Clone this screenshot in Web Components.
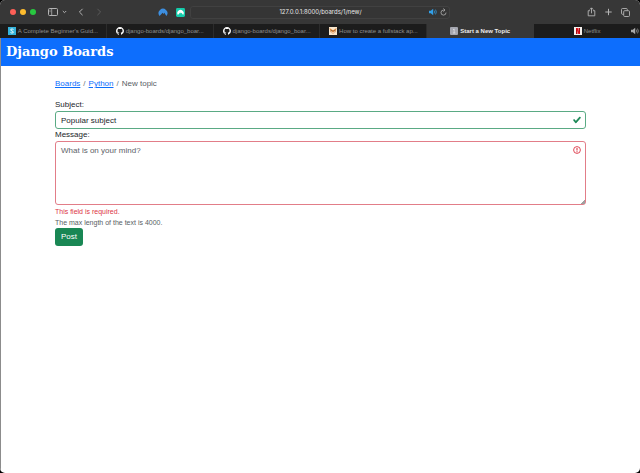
<!DOCTYPE html>
<html lang="en">
<head>
<meta charset="utf-8">
<meta name="viewport" content="width=device-width, initial-scale=1">
<title>Start a New Topic</title>
<style>
  body {
    margin: 0;
    background: #000;
    font-family: "Liberation Sans", Arial, sans-serif;
    font-size: 8px;
    line-height: 12px;
    color: #212529;
  }
</style>
</head>
<body>

<browser-window>
  <browser-toolbar slot="bar" url="127.0.0.1:8000/boards/1/new/"></browser-toolbar>
  <browser-tab slot="tab" icon="blog" label="A Complete Beginner's Guid..."></browser-tab>
  <browser-tab slot="tab" icon="github" label="django-boards/django_boar..."></browser-tab>
  <browser-tab slot="tab" icon="github" label="django-boards/django_boar..."></browser-tab>
  <browser-tab slot="tab" icon="fox" label="How to create a fullstack ap..."></browser-tab>
  <browser-tab slot="tab" icon="page" label="Start a New Topic" active></browser-tab>
  <browser-tab slot="tab" icon="netflix" label="Netflix" playing></browser-tab>

  <site-header>Django Boards</site-header>
  <page-container>
    <bread-crumbs>
      <a href="#boards">Boards</a>
      <a href="#python">Python</a>
      <span>New topic</span>
    </bread-crumbs>
    <topic-form></topic-form>
  </page-container>
</browser-window>

<script>
/* small helper: open shadow root filled with the given markup */
function attach(el, html) {
  const root = el.attachShadow({ mode: 'open' });
  root.innerHTML = html;
  return root;
}

/* Window frame: toolbar, tab strip and page area */
class BrowserWindow extends HTMLElement {
  constructor() {
    super();
    attach(this, `
      <style>
        :host {
          display: flex; flex-direction: column;
          min-height: 100vh; box-sizing: border-box;
          background: #fff; border-radius: 5px; overflow: hidden;
        }
        .tabs { display: flex; background: #1c1c1c; }
        .page { flex: 1; border-left: 1px solid #8c8c8c; }
      </style>
      <slot name="bar"></slot>
      <nav class="tabs"><slot name="tab"></slot></nav>
      <div class="page"><slot></slot></div>
    `);
  }
}

class BrowserToolbar extends HTMLElement {
  constructor() {
    super();
    const root = attach(this, `
      <style>
        :host {
          display: grid; grid-template-columns: 1fr minmax(0, 260px) 1fr;
          align-items: center;
          height: 24px; background: #373737; color: #b4b4b4;
        }
        .side { display: flex; align-items: center; }
        .left { padding: 0 5px 0 10px; }
        .right { justify-content: flex-end; gap: 8px; padding-right: 10px; }
        .lights { display: flex; gap: 4px; margin-right: 12px; }
        .lights i { width: 6px; height: 6px; border-radius: 50%; }
        .red { background: #fe5f57; }
        .amber { background: #febc2e; }
        .green { background: #28c840; }
        button {
          display: flex; padding: 0; border: 0;
          background: none; color: inherit;
        }
        svg { display: block; fill: none; stroke: currentColor; }
        .groups { display: flex; gap: 4px; align-items: center; }
        .nav { display: flex; gap: 10px; margin-left: 11px; }
        .off { color: #5c5c5c; }
        .ext { display: flex; gap: 8px; margin-left: auto; }
        .address {
          display: flex; align-items: center; gap: 3px;
          box-sizing: border-box; height: 13px; padding: 0 2px 0 24px;
          border: 1px solid #414141; border-radius: 3px; background: #353535;
        }
        input {
          flex: 1; min-width: 0; padding: 0; border: 0; outline: 0;
          background: none; color: #e8e8e8; text-align: center;
          font-family: Inter, sans-serif; font-size: 6px; line-height: 12px;
        }
      </style>
      <div class="side left">
        <span class="lights"><i class="red"></i><i class="amber"></i><i class="green"></i></span>
        <span class="groups">
          <button aria-label="Sidebar">
            <svg width="10" height="8" viewBox="0 0 10 8"><rect x=".5" y=".5" width="9" height="7" rx="1"/><path d="M3.7.5v7M1.5 2.2h1M1.5 3.7h1" stroke-width=".8"/></svg>
          </button>
          <button aria-label="Tab groups">
            <svg width="5" height="4" viewBox="0 0 5 4"><path d="M.8 1 2.5 2.7 4.2 1"/></svg>
          </button>
        </span>
        <span class="nav">
          <button aria-label="Back"><svg width="6" height="8" viewBox="0 0 6 8"><path d="M4.6.8 1.4 4l3.2 3.2"/></svg></button>
          <button class="off" aria-label="Forward"><svg width="8" height="8" viewBox="0 0 8 8"><path d="M3.4.8 6.6 4 3.4 7.2"/></svg></button>
        </span>
        <span class="ext">
          <button aria-label="VPN">
            <svg width="10" height="9" viewBox="0 0 10 9"><path d="M1.6 8A4.400 4.400 0 1 1 8.400 8L6.300 4.800 5.500 5.900 4.600 4.700Z" fill="#3d8fe0" stroke="none"/></svg>
          </button>
          <button aria-label="Passwords">
            <svg width="9" height="9" viewBox="0 0 9 9"><rect width="9" height="9" rx="1.400" fill="#14cbaa" stroke="none"/><path d="M1.900 7A3.200 3.200 0 1 1 7.100 7L5.600 4.700 4.900 5.600 4.200 4.600Z" fill="#fff" stroke="none"/></svg>
          </button>
        </span>
      </div>
      <div class="address">
        <input type="text" aria-label="Address">
        <button aria-label="Mute tab">
          <svg width="8" height="8" viewBox="0 0 8 8"><path d="M0 2.8h1.8L4.2.8v6.4L1.8 5.2H0Z" fill="#32a0e8" stroke="none"/><path d="M5.3 2.6q1 1.4 0 2.8M6.5 1.6q1.7 2.4 0 4.8" stroke="#32a0e8" stroke-width=".7"/></svg>
        </button>
        <button aria-label="Reload">
          <svg width="7" height="8" viewBox="0 0 7 8"><path d="M6 4.600A2.500 2.500 0 1 1 3.500 2.100H4.700M3.400.5 5 2.100 3.400 3.700" stroke-width=".8"/></svg>
        </button>
      </div>
      <div class="side right">
        <button aria-label="Share"><svg width="9" height="10" viewBox="0 0 9 10"><path d="M3 3.7H1.2v5.1h6.6V3.7H6M4.5 6.3V1M2.8 2.5 4.5.8l1.700 1.700" stroke-width=".9"/></svg></button>
        <button aria-label="New tab"><svg width="9" height="8" viewBox="0 0 9 8"><path d="M4.5 .8v6.4M1.3 4h6.4"/></svg></button>
        <button aria-label="Show all tabs"><svg width="9" height="9" viewBox="0 0 9 9"><rect x="2.7" y="2.7" width="5.8" height="5.8" rx="1" stroke-width=".9"/><path d="M2.6 6.3H1.5q-1 0-1-1V1.5q0-1 1-1h3.8q1 0 1 1v1.1" stroke-width=".9"/></svg></button>
      </div>
    `);
    root.querySelector('input').value = this.getAttribute('url') || '';
  }
}

/* favicons, all drawn on a 16 unit grid */
const FAVICONS = {
  blog: '<rect width="16" height="16" fill="#35b3dc"/><path d="M11 5Q8 2.8 5.6 4.8 4.8 7.2 8 8q3.400 .8 2.500 3.200Q8 13.400 5 11" fill="none" stroke="#fff" stroke-width="1.800"/>',
  github: '<path fill="#fff" d="M8 0C3.580 0 0 3.580 0 8c0 3.540 2.290 6.530 5.470 7.590.4.070.550-.170.550-.380 0-.190-.010-.820-.010-1.490-2.010.370-2.530-.490-2.690-.940-.090-.230-.480-.940-.820-1.130-.280-.150-.680-.520-.010-.530.630-.010 1.080.580 1.230.820.720 1.210 1.870.870 2.330.660.070-.520.280-.870.510-1.070-1.780-.2-3.640-.890-3.640-3.950 0-.870.310-1.590.820-2.150-.080-.2-.360-1.020.080-2.120 0 0 .670-.210 2.200.820A7.600 7.600 0 0 1 8 3.870c.680 0 1.360.090 2 .270 1.530-1.040 2.200-.820 2.200-.820.440 1.100.160 1.920.080 2.120.510.560.820 1.270.820 2.150 0 3.070-1.870 3.750-3.650 3.950.290.250.540.730.540 1.480 0 1.070-.010 1.930-.010 2.200 0 .210.150.460.550.380A8 8 0 0 0 16 8c0-4.420-3.580-8-8-8Z"/>',
  fox: '<rect width="16" height="16" fill="#f7e6cd"/><path d="M1 2 7 6 9 6 15 2 13 10 8 14 3 10Z" fill="#d8863f"/><path d="M3.500 6 8 12 12.500 6 11 11 8 13.500 5 11Z" fill="#fff4e4"/><circle cx="5.500" cy="7.500" r="1" fill="#4b3628"/><circle cx="10.500" cy="7.500" r="1" fill="#4b3628"/>',
  page: '<rect width="16" height="16" rx="2" fill="#a5a7b0"/><path d="M6 5.500 8.300 4v8M5.800 12h5" fill="none" stroke="#e4e5ea" stroke-width="1.500"/>',
  netflix: '<rect width="16" height="16" fill="#f6f1ee"/><path d="M4 2h3v12H4ZM9 2h3v12H9Z" fill="#b1060f"/><path d="M4 2h3l5 12H9Z" fill="#e50914"/>'
};

class BrowserTab extends HTMLElement {
  constructor() {
    super();
    const root = attach(this, `
      <style>
        :host {
          flex: 1 1 0; min-width: 0; box-sizing: border-box;
          border-right: 1px solid #2c2c2c;
        }
        :host([active]) { background: #373737; border-color: #373737; }
        :host(:last-of-type) { border-right: 0; }
        a {
          display: flex; align-items: center; justify-content: center; gap: 2px;
          height: 14px; position: relative;
          color: #8e8e8e; font-size: 6px; line-height: 14px;
          text-decoration: none; white-space: nowrap;
        }
        :host([active]) a { color: #ececec; font-weight: bold; }
        svg { flex: none; }
        .sound { display: none; position: absolute; right: 1px; top: 3px; }
        :host([playing]) .sound { display: block; }
      </style>
      <a href="#tab">
        <svg width="8" height="8" viewBox="0 0 16 16">${FAVICONS[this.getAttribute('icon')] || ''}</svg>
        <span></span>
        <svg class="sound" width="8" height="8" viewBox="0 0 8 8"><path d="M0 2.800h1.800L4.200.8v6.400L1.800 5.200H0Z" fill="#a8a8a8"/><path d="M5.300 2.600q1 1.400 0 2.800M6.500 1.600q1.700 2.400 0 4.800" fill="none" stroke="#a8a8a8" stroke-width=".7"/></svg>
      </a>
    `);
    root.querySelector('span').textContent = this.getAttribute('label');
  }
}

class SiteHeader extends HTMLElement {
  constructor() {
    super();
    attach(this, `
      <style>
        :host { display: block; background: #0d6efd; padding: 5px; }
        a {
          display: block; color: #fff; text-decoration: none;
          font: bold 13px/18px "DejaVu Serif", serif;
        }
      </style>
      <a href="#home"><slot></slot></a>
    `);
  }
}

class PageContainer extends HTMLElement {
  constructor() {
    super();
    attach(this, `
      <style>
        :host { display: block; padding: 12px 54px; }
      </style>
      <slot></slot>
    `);
  }
}

class BreadCrumbs extends HTMLElement {
  constructor() {
    super();
    attach(this, `
      <style>
        :host { display: flex; margin-bottom: 9px; }
        ::slotted(a) { color: #0d6efd; }
        ::slotted(span) { color: #585e64; }
        ::slotted(:not(:first-child))::before {
          content: "/"; display: inline-block; padding: 0 3px; color: #6c757d;
        }
      </style>
      <slot></slot>
    `);
  }
}

/* Label + control + feedback. type="textarea" gives the multi-line one */
class FormField extends HTMLElement {
  constructor() {
    super();
    const area = this.getAttribute('type') === 'textarea';
    const control = area
      ? '<textarea id="control"></textarea>'
      : '<input id="control" type="text">';
    const root = attach(this, `
      <style>
        :host { display: block; --state: #5aaa84; }
        :host([invalid]) { --state: #e27d88; }
        label { display: block; }
        .box { display: grid; }
        input, textarea {
          grid-area: 1 / 1; box-sizing: border-box; width: 100%; margin: 0;
          padding: 2px 22px 2px 5px; border: 1px solid var(--state);
          border-radius: 3px; outline: 0; background: #fff;
          color: #212529; font: inherit;
        }
        input { height: 18px; }
        textarea { height: 64px; padding-top: 3px; resize: vertical; }
        textarea::-webkit-resizer {
          background: linear-gradient(135deg, transparent 84%, #a0a0a0 84%);
        }
        ::placeholder { color: #5c6268; opacity: 1; }
        svg {
          grid-area: 1 / 1; justify-self: end; align-self: start;
          margin: 5px 5px 0 0; pointer-events: none;
        }
      </style>
      <label for="control"></label>
      <div class="box">
        ${control}
        ${this.hasAttribute('invalid')
          ? '<svg width="8" height="8" viewBox="0 0 8 8" fill="none" stroke="#dc3545"><circle cx="4" cy="4" r="3.400" stroke-width=".9"/><path d="M4 1.900v2.600M4 5.200v1" stroke-width="1.100"/></svg>'
          : '<svg width="8" height="8" viewBox="0 0 8 8"><path fill="#198754" stroke="#198754" stroke-width=".5" d="M2.300 6.730.6 4.530c-.4-1.040.46-1.400 1.100-.8l1.100 1.400 3.400-3.800c.6-.630 1.600-.270 1.200.7l-4 4.600c-.430.5-.8.4-1.100.1z"/></svg>'}
      </div>
      <slot></slot>
    `);
    root.querySelector('label').textContent = this.getAttribute('label');
    const input = root.getElementById('control');
    input.value = this.getAttribute('value') || '';
    input.placeholder = this.getAttribute('placeholder') || '';
  }
}

class TopicForm extends HTMLElement {
  constructor() {
    super();
    attach(this, `
      <style>
        :host { display: block; }
        form { margin: 0; }
        small { display: block; font-size: 7px; line-height: 11px; color: #585e64; }
        .feedback { margin-top: 1px; color: #dc3545; }
        button {
          display: block; padding: 3px 6px; border: 0; border-radius: 3px;
          background: #198754; color: #fff; font: inherit;
        }
      </style>
      <form>
        <form-field label="Subject:" value="Popular subject"></form-field>
        <form-field label="Message:" type="textarea" placeholder="What is on your mind?" invalid>
          <small class="feedback">This field is required.</small>
          <small>The max length of the text is 4000.</small>
        </form-field>
        <button type="submit">Post</button>
      </form>
    `);
  }
}

customElements.define('browser-window', BrowserWindow);
customElements.define('browser-toolbar', BrowserToolbar);
customElements.define('browser-tab', BrowserTab);
customElements.define('site-header', SiteHeader);
customElements.define('page-container', PageContainer);
customElements.define('bread-crumbs', BreadCrumbs);
customElements.define('form-field', FormField);
customElements.define('topic-form', TopicForm);
</script>
</body>
</html>
